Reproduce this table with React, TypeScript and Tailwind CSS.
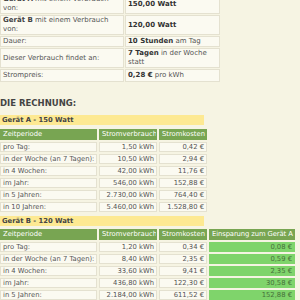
const cell = "border border-[#e4e1d0] bg-[#fbfaf1] px-[2px] align-middle overflow-hidden";
const head = "border border-[#78a552] bg-[#78a552] px-[2px] text-left font-normal text-white leading-[9px] overflow-hidden";
const save = "border border-[#7fd46b] bg-[#7fd46b] px-[2px] text-right text-[#46703a]";

const rowsA = [
  ["pro Tag:", "1,50 kWh", "0,42 €"],
  ["in der Woche (an 7 Tagen):", "10,50 kWh", "2,94 €"],
  ["in 4 Wochen:", "42,00 kWh", "11,76 €"],
  ["im Jahr:", "546,00 kWh", "152,88 €"],
  ["in 5 Jahren:", "2.730,00 kWh", "764,40 €"],
  ["in 10 Jahren:", "5.460,00 kWh", "1.528,80 €"],
];

const rowsB = [
  ["pro Tag:", "1,20 kWh", "0,34 €", "0,08 €"],
  ["in der Woche (an 7 Tagen):", "8,40 kWh", "2,35 €", "0,59 €"],
  ["in 4 Wochen:", "33,60 kWh", "9,41 €", "2,35 €"],
  ["im Jahr:", "436,80 kWh", "122,30 €", "30,58 €"],
  ["in 5 Jahren:", "2.184,00 kWh", "611,52 €", "152,88 €"],
];

function DeviceTitle({ label, className = "" }: { label: string; className?: string }) {
  return (
    <div className={"w-[204px] bg-[#fde992] px-[2px] py-[1px] font-bold text-[#444] leading-[8px] " + className}>
      {label}
    </div>
  );
}

export default function App() {
  return (
    <div className="min-h-screen w-[300px] overflow-hidden bg-[#f6f4e3] text-[6.8px] text-[#555] [font-family:'DejaVu_Sans',Verdana,sans-serif]">
      <div className="-mt-[7px]">
        <table className="border-separate border-spacing-[1px] leading-[9px] -ml-[1px] text-[7px]">
          <tbody>
            <tr>
              <td className={cell + " w-[124px]"}>
                <b className="text-[#444]">Gerät A</b> mit einem Verbrauch von:
              </td>
              <td className={cell + " w-[95px]"}>
                <b className="text-[#333]">150,00 Watt</b>
              </td>
            </tr>
            <tr>
              <td className={cell}>
                <b className="text-[#444]">Gerät B</b> mit einem Verbrauch von:
              </td>
              <td className={cell}>
                <b className="text-[#333]">120,00 Watt</b>
              </td>
            </tr>
            <tr>
              <td className={cell}>Dauer:</td>
              <td className={cell}>
                <b className="text-[#333]">10 Stunden</b> am Tag
              </td>
            </tr>
            <tr>
              <td className={cell + " py-[1px]"}>Dieser Verbrauch findet an:</td>
              <td className={cell}>
                <b className="text-[#333]">7 Tagen</b> in der Woche statt
              </td>
            </tr>
            <tr>
              <td className={cell + " py-[1px]"}>Strompreis:</td>
              <td className={cell}>
                <b className="text-[#333]">0,28 €</b> pro kWh
              </td>
            </tr>
          </tbody>
        </table>

        <h2 className="mt-[15px] mb-[7px] text-[8.5px] font-bold leading-[10px] text-[#444]">DIE RECHNUNG:</h2>

        <DeviceTitle label="Gerät A - 150 Watt" />
        <table className="mt-[2px] w-[211px] table-fixed border-separate border-spacing-[2px] whitespace-nowrap leading-[8px] -ml-[2px]">
          <thead>
            <tr>
              <th className={head + " w-[97px]"}>Zeitperiode</th>
              <th className={head + " w-[58px]"}>Stromverbrauch</th>
              <th className={head + " w-[48px]"}>Stromkosten</th>
            </tr>
          </thead>
          <tbody>
            {rowsA.map((r) => (
              <tr key={r[0]}>
                <td className={cell}>{r[0]}</td>
                <td className={cell + " text-right"}>{r[1]}</td>
                <td className={cell + " text-right"}>{r[2]}</td>
              </tr>
            ))}
          </tbody>
        </table>

        <DeviceTitle label="Gerät B - 120 Watt" className="mt-[2px]" />
        <table className="mt-[1px] w-[299px] table-fixed border-separate border-spacing-[2px] whitespace-nowrap leading-[8px] -ml-[2px]">
          <thead>
            <tr>
              <th className={head + " w-[97px]"}>Zeitperiode</th>
              <th className={head + " w-[58px]"}>Stromverbrauch</th>
              <th className={head + " w-[48px]"}>Stromkosten</th>
              <th className={head + " w-[86px] tracking-[-0.1px]"}>Einsparung zum Gerät A</th>
            </tr>
          </thead>
          <tbody>
            {rowsB.map((r) => (
              <tr key={r[0]}>
                <td className={cell}>{r[0]}</td>
                <td className={cell + " text-right"}>{r[1]}</td>
                <td className={cell + " text-right"}>{r[2]}</td>
                <td className={save}>{r[3]}</td>
              </tr>
            ))}
          </tbody>
        </table>
      </div>
    </div>
  );
}
